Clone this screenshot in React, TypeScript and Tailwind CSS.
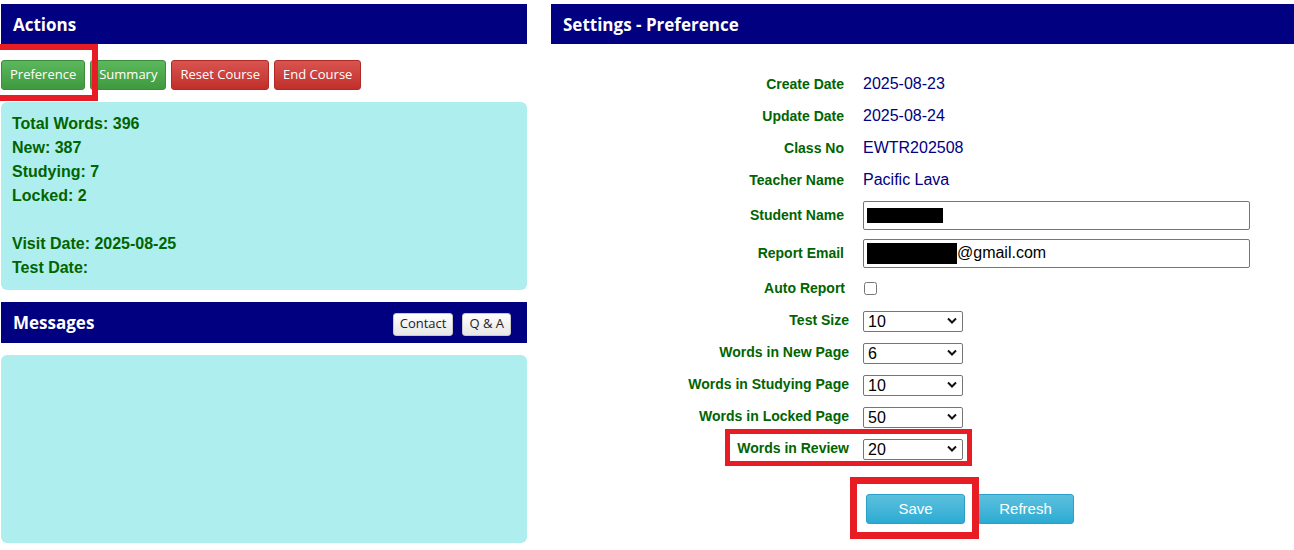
import React from "react";

const head = "h-10 bg-[#000080] flex items-center px-3 pt-[1px] text-white font-bold text-[17px] font-['Open_Sans',sans-serif]";

function Btn({ color, children }: any) {
  const cls =
    color === "green"
      ? "bg-gradient-to-b from-[#5cb85c] to-[#3f9a3f] border-[#3d8b3d]"
      : "bg-gradient-to-b from-[#d9534f] to-[#c12e2a] border-[#b02a26]";
  return (
    <button className={`h-[30px] px-[8px] rounded-[3px] border text-white text-[13px] font-['Open_Sans',sans-serif] ${cls}`}>
      {children}
    </button>
  );
}

function Chevron() {
  return (
    <svg className="absolute right-[6px] top-[7px] pointer-events-none" width="10" height="7" viewBox="0 0 10 7">
      <path d="M1 1.5 L5 5.5 L9 1.5" fill="none" stroke="#111" strokeWidth="2" />
    </svg>
  );
}

function Sel({ value }: { value: string }) {
  return (
    <div className="relative w-[100px] h-[21px]">
      <select
        defaultValue={value}
        className="appearance-none w-full h-full border border-[#767676] rounded-[2px] bg-white pl-[4px] text-[16px] leading-[19px] text-black"
      >
        <option>{value}</option>
      </select>
      <Chevron />
    </div>
  );
}

const val = "text-[16px] text-[#000080]";

// label, value, row height, label right padding
const rows: [string, React.ReactNode, string, string][] = [
  ["Create Date", <span className={val}>2025-08-23</span>, "h-8", "pr-[5px]"],
  ["Update Date", <span className={val}>2025-08-24</span>, "h-8", "pr-[5px]"],
  ["Class No", <span className={val}>EWTR202508</span>, "h-8", "pr-[5px]"],
  ["Teacher Name", <span className={val}>Pacific Lava</span>, "h-8", "pr-[5px]"],
  [
    "Student Name",
    <div className="w-[387px] h-[29px] border border-[#767676] rounded-[2px] flex items-center pl-[3px]">
      <span className="block w-[76px] h-[15px] bg-black" />
    </div>,
    "h-[38px]",
    "pr-[5px]",
  ],
  [
    "Report Email",
    <div className="w-[387px] h-[29px] border border-[#767676] rounded-[2px] flex items-center pl-[3px] text-[16px] text-black">
      <span className="block w-[90px] h-[21px] bg-black" />
      @gmail.com
    </div>,
    "h-[38px]",
    "pr-[5px]",
  ],
  ["Auto Report", <input type="checkbox" className="w-[13px] h-[13px] ml-[1px]" />, "h-8", "pr-[4px]"],
  ["Test Size", <Sel value="10" />, "h-8", ""],
  ["Words in New Page", <Sel value="6" />, "h-8", ""],
  ["Words in Studying Page", <Sel value="10" />, "h-8", ""],
  ["Words in Locked Page", <Sel value="50" />, "h-8", ""],
  ["Words in Review", <Sel value="20" />, "h-8", ""],
];

const light =
  "h-[23px] px-[6px] rounded-[3px] border border-[#c8c8c8] bg-gradient-to-b from-white to-[#e6e6e6] text-[13px] text-[#222] font-['Open_Sans',sans-serif]";

export default function App() {
  return (
    <div className="relative w-[1294px] h-[550px] overflow-hidden bg-white flex pt-1 pl-[1px] font-['Liberation_Sans',Arial,sans-serif]">
      {/* left column */}
      <div className="w-[526px] flex flex-col">
        <div className={head}>Actions</div>
        <div className="flex gap-[5px] mt-4">
          <Btn color="green">Preference</Btn>
          <Btn color="green">Summary</Btn>
          <Btn color="red">Reset Course</Btn>
          <Btn color="red">End Course</Btn>
        </div>
        <div className="mt-3 h-[188px] bg-[#afeeee] rounded-[6px] pt-[10px] pl-[11px] text-[16px] leading-6 font-bold text-[#006400]">
          <div>Total Words: 396</div>
          <div>New: 387</div>
          <div>Studying: 7</div>
          <div>Locked: 2</div>
          <div>&nbsp;</div>
          <div>Visit Date: 2025-08-25</div>
          <div>Test Date:</div>
        </div>
        <div className="mt-3 h-[41px] bg-[#000080] flex items-center pl-3 pr-[16px]">
          <span className="text-white font-bold text-[17px] font-['Open_Sans',sans-serif]">Messages</span>
          <div className="ml-auto flex gap-[9px] mt-[3px]">
            <button className={light}>Contact</button>
            <button className={light}>Q &amp; A</button>
          </div>
        </div>
        <div className="mt-3 h-[188px] bg-[#afeeee] rounded-[6px]" />
      </div>

      {/* right column */}
      <div className="ml-6 flex-1 flex flex-col">
        <div className={head}>Settings - Preference</div>
        <div className="mt-6 flex flex-col">
          {rows.map(([label, value, h, pr]) => (
            <div key={label} className={`flex items-center ${h}`}>
              <div className={`w-[298px] text-right text-[14px] font-bold text-[#006400] ${pr}`}>{label}</div>
              <div className="ml-[14px] flex items-center">{value}</div>
            </div>
          ))}
          <div className="flex mt-[30px] ml-[315px] gap-[12px]">
            <button className="w-[99px] h-[30px] rounded-[3px] border border-[#2aa0c8] bg-gradient-to-b from-[#5bc0de] to-[#2aabd2] text-white text-[15px]">
              Save
            </button>
            <button className="w-[97px] h-[30px] rounded-[3px] border border-[#2aa0c8] bg-gradient-to-b from-[#5bc0de] to-[#2aabd2] text-white text-[15px]">
              Refresh
            </button>
          </div>
        </div>
      </div>

      {/* red annotation boxes */}
      <div className="absolute left-[-6px] top-[44px] w-[104px] h-[57px] border-[6px] border-[#e81c24] pointer-events-none" />
      <div className="absolute left-[725px] top-[429px] w-[247px] h-[37px] border-[5px] border-[#e81c24] pointer-events-none" />
      <div className="absolute left-[850px] top-[477px] w-[129px] h-[62px] border-[7px] border-[#e81c24] pointer-events-none" />
    </div>
  );
}
